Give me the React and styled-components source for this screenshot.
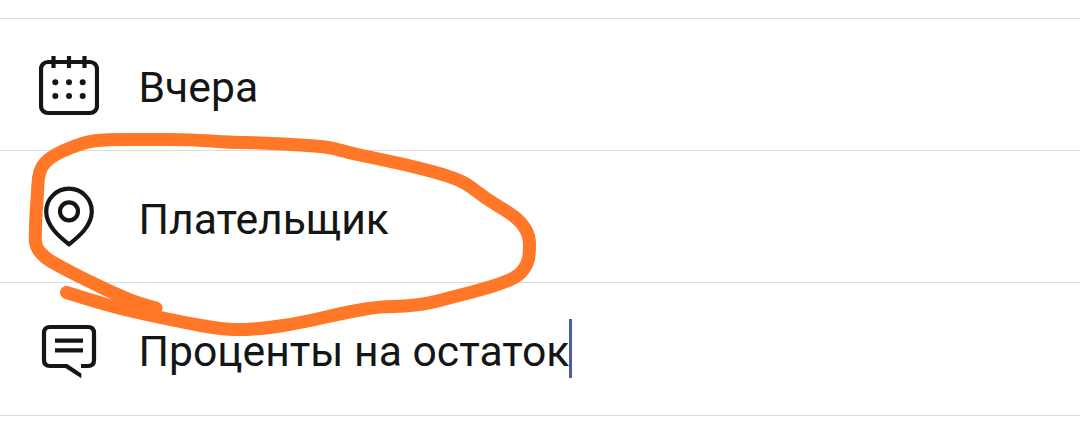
import React from 'react';
import styled, { createGlobalStyle } from 'styled-components';

const theme = {
  background: '#ffffff',
  text: '#141616',
  divider: '#dcdcdd',
  cursor: '#4b5cab',
  marker: '#ff7727',
};

const GlobalStyle = createGlobalStyle`
  body {
    margin: 0;
    background: ${theme.background};
    overflow: hidden;
  }
`;

const Screen = styled.main`
  position: relative;
  width: 1080px;
  height: 437px;
  overflow: hidden;
  background: ${theme.background};
  color: ${theme.text};
  font-family: Roboto, sans-serif;
`;

const List = styled.div`
  margin-top: 18px;
  border-top: 1px solid ${theme.divider};
`;

const Row = styled.div`
  display: flex;
  align-items: flex-start;
  gap: 39.5px;
  box-sizing: border-box;
  height: ${(props) => props.$height || 132}px;
  padding: 33px 39px 0;
  border-bottom: 1px solid ${theme.divider};
`;

const Icon = styled.svg`
  flex: none;
  width: 60px;
  height: 65px;
  fill: none;
  stroke: currentColor;
  stroke-width: 4.2;
`;

const Label = styled.span`
  margin-top: 5px;
  font-size: 42.7px;
  line-height: 60px;
  white-space: nowrap;
`;

const Field = styled.div`
  display: flex;
  align-items: flex-start;
`;

const Cursor = styled.span`
  width: 3px;
  height: 59px;
  margin-top: 3px;
  background: ${theme.cursor};
`;

const Marker = styled.svg`
  position: absolute;
  top: 0;
  left: 0;
  width: 1080px;
  height: 437px;
  fill: none;
  stroke: ${theme.marker};
  stroke-width: 13;
  stroke-linecap: round;
  stroke-linejoin: round;
  pointer-events: none;
`;

const CalendarIcon = () => (
  <Icon viewBox="0 0 60 65">
    <rect x="2" y="10" width="56" height="51" rx="7" />
    <path d="M14.5 4v12M30 4v12M45.5 4v12" />
    <g fill="currentColor" stroke="none">
      {[30.3, 44].map((y) =>
        [16.3, 30, 43.7].map((x) => <circle key={`${x}-${y}`} cx={x} cy={y} r="3" />)
      )}
    </g>
  </Icon>
);

const PinIcon = () => (
  <Icon viewBox="0 0 60 65">
    <path
      strokeLinejoin="round"
      d="M30 60.3C22 54 7.2 42.5 7.2 27.5A22.8 22.8 0 0 1 52.8 27.5C52.8 42.5 38 54 30 60.3Z"
    />
    <circle cx="30" cy="27.3" r="9" />
  </Icon>
);

const CommentIcon = () => (
  <Icon viewBox="0 0 60 65">
    <path d="M42 50H49Q55 50 55 44V17Q55 11 49 11H11Q5 11 5 17V44Q5 50 11 50H27" />
    <path fill="currentColor" stroke="none" d="M26 48H28.3L42.3 57.4V62.2L26 51.8Z" />
    <path d="M16 24.7H44M16 34.3H44" />
  </Icon>
);

const strokePoints = [
  [66.5, 292.5], [87, 299], [120, 308.5], [153, 316], [187, 323], [218, 328.5],
  [240, 330], [267, 328], [300, 323], [350, 311.5], [381, 306.5], [405, 306.5],
  [430, 303], [447, 298.5], [480, 290], [500, 284], [519, 276], [528, 263],
  [529.5, 252], [529.5, 236], [522, 223], [510, 213], [487, 199.5], [466, 183],
  [447, 175.5], [423, 169], [400, 163.5], [367, 156.5], [350, 153], [333, 148],
  [317, 146], [283, 144], [250, 142.5], [233, 142.5], [190, 139.5], [150, 139.5],
  [105, 139.5], [85, 142], [55, 154], [42, 165], [38, 178], [37.5, 195],
  [36, 212], [35.5, 230], [35, 246], [45, 258], [60, 266.5], [87, 280.5],
  [120, 296], [138, 303], [156, 308],
];

// joins the points with quadratic curves through their midpoints
const smoothPath = (points) => {
  let d = `M${points[0].join(' ')}`;
  for (let i = 1; i < points.length - 1; i++) {
    const [x, y] = points[i];
    const [nx, ny] = points[i + 1];
    d += `Q${x} ${y} ${(x + nx) / 2} ${(y + ny) / 2}`;
  }
  return `${d}L${points[points.length - 1].join(' ')}`;
};

const App = () => {
  return (
    <Screen>
      <GlobalStyle />
      <List>
        <Row>
          <CalendarIcon />
          <Label>Вчера</Label>
        </Row>
        <Row>
          <PinIcon />
          <Label>Плательщик</Label>
        </Row>
        <Row $height={133}>
          <CommentIcon />
          <Field>
            <Label>Проценты на остаток</Label>
            <Cursor />
          </Field>
        </Row>
      </List>
      {/* freehand loop around the payer row */}
      <Marker viewBox="0 0 1080 437">
        <path d={smoothPath(strokePoints)} />
      </Marker>
    </Screen>
  );
};

export default App;
